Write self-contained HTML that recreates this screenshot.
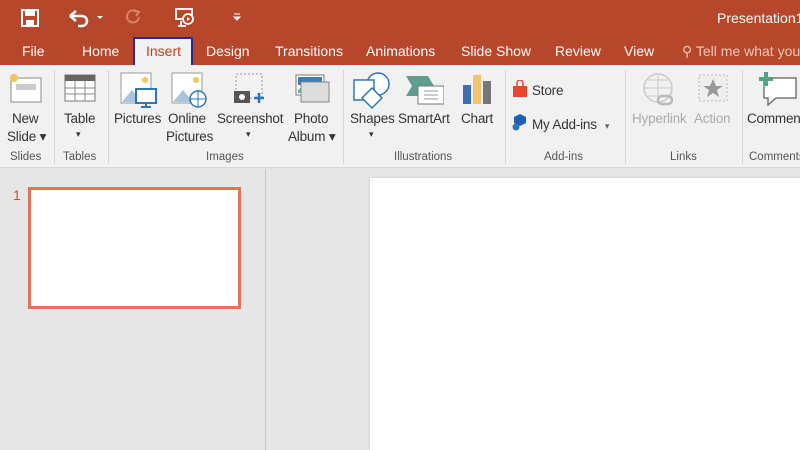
<!DOCTYPE html><html><head><style>
*{margin:0;padding:0;box-sizing:border-box}
body{width:800px;height:450px;overflow:hidden;position:relative;font-family:"Liberation Sans",sans-serif;background:#e6e6e6}
.a{position:absolute;white-space:nowrap}
.t{color:#fff;font-size:14px}
.r{color:#333;font-size:13.5px;letter-spacing:-0.2px}
.g{color:#555;font-size:11.5px}
.sep{position:absolute;top:70px;width:1px;height:94px;background:#d4d4d4}
</style></head><body>
<div class="a" style="left:0;top:0;width:800px;height:65px;background:#b7472a"></div>
<svg class="a" style="left:20px;top:8px" width="20" height="20"><rect x="2" y="2" width="16" height="16" fill="none" stroke="#fff" stroke-width="2"/><rect x="5" y="2" width="10" height="6" fill="#fff"/><rect x="6" y="12" width="8" height="6" fill="#fff"/></svg>
<svg class="a" style="left:68px;top:8px" width="40" height="20"><path d="M4 8 H14 a5 5 0 0 1 0 10 H10" fill="none" stroke="#fff" stroke-width="2.5"/><path d="M2 8 L8 3 M2 8 L8 13" stroke="#fff" stroke-width="2.5"/><path d="M29 8 l3 3 l3 -3z" fill="#fff"/></svg>
<svg class="a" style="left:124px;top:8px" width="18" height="18"><path d="M13 4 A6 6 0 1 0 15 9" fill="none" stroke="#d8826a" stroke-width="2"/><path d="M10 2 L15 4 L12 8" fill="none" stroke="#d8826a" stroke-width="2"/></svg>
<svg class="a" style="left:174px;top:7px" width="22" height="22"><rect x="2" y="2" width="16" height="10" fill="none" stroke="#fff" stroke-width="1.8"/><circle cx="14" cy="12" r="5" fill="#b7472a" stroke="#fff" stroke-width="1.8"/><path d="M13 10 l3 2 l-3 2z" fill="#fff"/><path d="M7 14 v5 M4 19 h8" stroke="#fff" stroke-width="1.8"/></svg>
<svg class="a" style="left:232px;top:12px" width="10" height="10"><path d="M2 2 h6 M2 5 l3 3 l3 -3z" stroke="#fff" fill="#fff"/></svg>
<div class="a t" style="left:717px;top:10px">Presentation1</div>
<div class="a t" style="left:22px;top:43px">File</div>
<div class="a t" style="left:82px;top:43px">Home</div>
<div class="a" style="left:133px;top:37px;width:60px;height:28px;background:#f1f1f1;border:2px solid #2b2b8f;border-bottom:none"></div>
<div class="a" style="left:146px;top:43px;color:#c43e1c;font-size:14px">Insert</div>
<div class="a t" style="left:206px;top:43px">Design</div>
<div class="a t" style="left:275px;top:43px">Transitions</div>
<div class="a t" style="left:366px;top:43px">Animations</div>
<div class="a t" style="left:461px;top:43px">Slide Show</div>
<div class="a t" style="left:555px;top:43px">Review</div>
<div class="a t" style="left:624px;top:43px">View</div>
<div class="a" style="left:682px;top:43px;color:#f0c7b8;font-size:14px">⚲ Tell me what you</div>
<div class="a" style="left:0;top:65px;width:800px;height:103px;background:#f1f1f1;border-bottom:1px solid #d6d6d6"></div>
<div class="sep" style="left:54px"></div><div class="sep" style="left:108px"></div><div class="sep" style="left:343px"></div><div class="sep" style="left:505px"></div><div class="sep" style="left:625px"></div><div class="sep" style="left:742px"></div>
<svg class="a" style="left:8px;top:72px" width="36" height="32"><rect x="3" y="6" width="30" height="24" fill="#fff" stroke="#888"/><rect x="8" y="12" width="20" height="6" fill="#ccc"/><circle cx="6" cy="6" r="4" fill="#f2c45a"/></svg>
<svg class="a" style="left:64px;top:73px" width="32" height="30"><rect x="1" y="2" width="30" height="26" fill="#fff" stroke="#777"/><rect x="1" y="2" width="30" height="6" fill="#666"/><path d="M1 15h30M1 21h30M11 8v20M21 8v20" stroke="#888"/></svg>
<svg class="a" style="left:120px;top:72px" width="38" height="36"><rect x="1" y="1" width="30" height="30" fill="#fff" stroke="#999"/><path d="M2 30 L12 18 L22 30z" fill="#a9c4dd"/><circle cx="25" cy="8" r="3" fill="#f2c45a"/><rect x="16" y="17" width="20" height="14" fill="#fff" stroke="#2e75b6" stroke-width="2"/><path d="M26 31v4M21 35h10" stroke="#2e75b6" stroke-width="2"/></svg>
<svg class="a" style="left:171px;top:72px" width="38" height="36"><rect x="1" y="1" width="30" height="30" fill="#fff" stroke="#999"/><path d="M2 30 L12 18 L22 30z" fill="#a9c4dd"/><circle cx="25" cy="8" r="3" fill="#f2c45a"/><circle cx="27" cy="27" r="8" fill="#fff" stroke="#2e75b6" stroke-width="1.5"/><path d="M19 27h16M27 19v16" stroke="#2e75b6"/></svg>
<svg class="a" style="left:233px;top:73px" width="36" height="34"><rect x="3" y="1" width="26" height="24" fill="none" stroke="#999" stroke-dasharray="2 2"/><rect x="1" y="18" width="16" height="12" fill="#555"/><circle cx="9" cy="24" r="3" fill="#fff"/><path d="M26 20v10M21 25h10" stroke="#2e75b6" stroke-width="2.5"/></svg>
<svg class="a" style="left:295px;top:74px" width="36" height="30"><rect x="1" y="1" width="28" height="20" fill="#fff" stroke="#777"/><path d="M3 16 Q14 6 27 14 V19 H3z" fill="#6db2a3"/><rect x="3" y="3" width="24" height="8" fill="#3d7ab8"/><rect x="6" y="8" width="28" height="20" fill="#ddd" stroke="#888"/></svg>
<svg class="a" style="left:352px;top:70px" width="40" height="40"><circle cx="26" cy="14" r="11" fill="#fff" stroke="#2e75b6" stroke-width="1.5"/><rect x="2" y="10" width="20" height="20" fill="#fff" stroke="#2e75b6" stroke-width="1.5"/><path d="M20 18 L30 28 L20 38 L10 28z" fill="#fff" stroke="#2e75b6" stroke-width="1.5"/></svg>
<svg class="a" style="left:404px;top:74px" width="40" height="32"><path d="M2 2 H24 L30 12 L24 22 H2 L8 12z" fill="#5f9e8f"/><rect x="14" y="12" width="26" height="18" fill="#fff" stroke="#777"/><path d="M20 17h14M20 21h14M20 25h14" stroke="#999"/></svg>
<svg class="a" style="left:461px;top:73px" width="32" height="32"><rect x="2" y="12" width="8" height="19" fill="#3d6fb5"/><rect x="12" y="2" width="8" height="29" fill="#f0c36d"/><rect x="22" y="8" width="8" height="23" fill="#777"/></svg>
<svg class="a" style="left:512px;top:80px" width="16" height="18"><path d="M1 6h14v11H1z" fill="#e8462a"/><path d="M5 6V3a3 3 0 0 1 6 0v3" fill="none" stroke="#e8462a" stroke-width="1.5"/></svg>
<svg class="a" style="left:512px;top:113px" width="16" height="18"><path d="M8 1 L14 4 V10 L8 13 L2 10 V4z" fill="#1f5fb0"/><circle cx="4" cy="14" r="3.5" fill="#2e75b6"/></svg>
<svg class="a" style="left:642px;top:72px" width="34" height="36" opacity=".45"><circle cx="16" cy="16" r="14" fill="none" stroke="#999" stroke-width="1.5"/><path d="M2 16h28M16 2v28M6 8h20M6 24h20" stroke="#999"/><rect x="16" y="24" width="14" height="8" rx="4" fill="none" stroke="#777" stroke-width="2.5"/></svg>
<svg class="a" style="left:697px;top:73px" width="32" height="30"><rect x="2" y="2" width="28" height="26" fill="#eee" stroke="#bbb" stroke-dasharray="2 2"/><path d="M16 6l3 7h7l-6 4 2 7-6-4-6 4 2-7-6-4h7z" fill="#999"/></svg>
<svg class="a" style="left:758px;top:70px" width="40" height="36"><path d="M6 8 H38 V28 H18 L10 35 V28 H6z" fill="#fff" stroke="#777" stroke-width="1.5"/><path d="M8 2v14M1 9h14" stroke="#4ea388" stroke-width="4"/></svg>
<div class="a r" style="left:12px;top:111px">New</div>
<div class="a r" style="left:7px;top:129px">Slide ▾</div>
<div class="a r" style="left:64px;top:111px">Table</div>
<div class="a r" style="left:76px;top:129px;font-size:9px">▾</div>
<div class="a r" style="left:114px;top:111px">Pictures</div>
<div class="a r" style="left:168px;top:111px">Online</div>
<div class="a r" style="left:166px;top:129px">Pictures</div>
<div class="a r" style="left:217px;top:111px">Screenshot</div>
<div class="a r" style="left:246px;top:129px;font-size:9px">▾</div>
<div class="a r" style="left:294px;top:111px">Photo</div>
<div class="a r" style="left:288px;top:129px">Album ▾</div>
<div class="a r" style="left:350px;top:111px">Shapes</div>
<div class="a r" style="left:369px;top:129px;font-size:9px">▾</div>
<div class="a r" style="left:398px;top:111px">SmartArt</div>
<div class="a r" style="left:461px;top:111px">Chart</div>
<div class="a r" style="left:532px;top:83px">Store</div>
<div class="a r" style="left:532px;top:117px">My Add-ins <span style="font-size:9px;color:#666">&nbsp;&nbsp;▾</span></div>
<div class="a r" style="left:632px;top:111px;color:#aaa">Hyperlink</div>
<div class="a r" style="left:694px;top:111px;color:#aaa">Action</div>
<div class="a r" style="left:747px;top:111px">Comment</div>
<div class="a g" style="left:10px;top:151px">Slides</div>
<div class="a g" style="left:63px;top:151px">Tables</div>
<div class="a g" style="left:206px;top:151px">Images</div>
<div class="a g" style="left:394px;top:151px">Illustrations</div>
<div class="a g" style="left:544px;top:151px">Add-ins</div>
<div class="a g" style="left:670px;top:151px">Links</div>
<div class="a g" style="left:749px;top:151px">Comments</div>
<div class="a" style="left:265px;top:169px;width:1px;height:281px;background:#c8c8c8"></div>
<div class="a" style="left:13px;top:187px;color:#c8502e;font-size:14px">1</div>
<div class="a" style="left:28px;top:187px;width:213px;height:122px;background:#fff;border:3px solid #e0735a"></div>
<div class="a" style="left:370px;top:178px;width:430px;height:272px;background:#fff;box-shadow:0 0 2px #bbb"></div>
</body></html>
